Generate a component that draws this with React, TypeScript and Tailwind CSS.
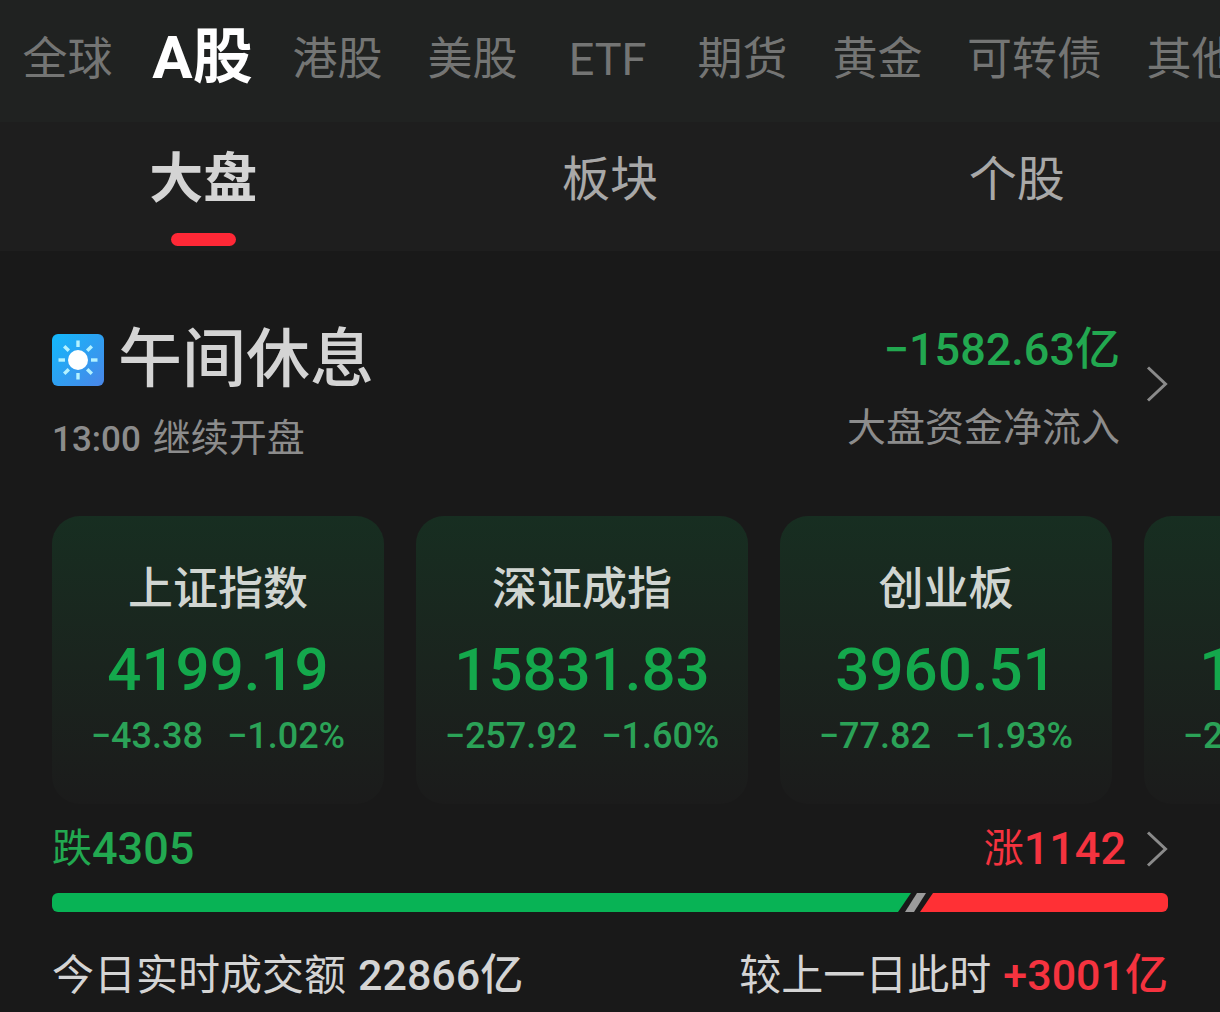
import React, { useState } from 'react';
import { clsx } from 'clsx';

interface IndexQuote {
  name: string;
  value: string;
  change: string;
  percent: string;
}

const markets = ['全球', 'A股', '港股', '美股', 'ETF', '期货', '黄金', '可转债', '其他'];

const sections = ['大盘', '板块', '个股'];

const quotes: IndexQuote[] = [
  { name: '上证指数', value: '4199.19', change: '−43.38', percent: '−1.02%' },
  { name: '深证成指', value: '15831.83', change: '−257.92', percent: '−1.60%' },
  { name: '创业板', value: '3960.51', change: '−77.82', percent: '−1.93%' },
  { name: '科创50', value: '1681.55', change: '−26.47', percent: '−1.55%' },
];

function SunIcon() {
  return (
    <svg viewBox="0 0 52 52" className="size-[52px] shrink-0" aria-hidden="true">
      <defs>
        <linearGradient id="sky" x1="0" y1="0" x2="1" y2="1">
          <stop offset="0" stopColor="#12b9fb" />
          <stop offset="1" stopColor="#4a86e8" />
        </linearGradient>
      </defs>
      <rect width="52" height="52" rx="6" fill="url(#sky)" />
      <circle cx="26" cy="26" r="10" fill="#fff" />
      <g stroke="#b4f2ff" strokeWidth="3.4">
        {[0, 45, 90, 135, 180, 225, 270, 315].map((angle) => (
          <path key={angle} d="M26 6.5v6.5" transform={`rotate(${angle} 26 26)`} />
        ))}
      </g>
    </svg>
  );
}

function Chevron() {
  return (
    <svg viewBox="0 0 22 38" className="h-[38px] w-[22px] shrink-0" fill="none" aria-hidden="true">
      <path d="M2 2.5 19.5 19 2 35.5" stroke="#8a8a8a" strokeWidth="3" />
    </svg>
  );
}

function MarketNav() {
  const [active, setActive] = useState('A股');

  return (
    <nav className="flex h-[122px] items-center overflow-hidden bg-[#202221] pb-[2px]">
      {markets.map((market) => (
        <button
          key={market}
          type="button"
          onClick={() => setActive(market)}
          className={clsx(
            'min-w-[135px] shrink-0 text-center whitespace-nowrap',
            market === active
              ? 'pb-1 text-[60px] leading-[72px] font-bold text-white'
              : 'px-[22px] text-[45px] leading-[72px] text-[#747574]'
          )}
        >
          {market}
        </button>
      ))}
    </nav>
  );
}

function SectionTabs() {
  const [active, setActive] = useState('大盘');

  return (
    <div className="grid h-[129px] grid-cols-3 bg-[#1e1e1e]">
      {sections.map((section) => (
        <button
          key={section}
          type="button"
          onClick={() => setActive(section)}
          className="flex flex-col items-center justify-between pt-[22px] pb-[5px]"
        >
          <span
            className={clsx(
              'leading-[72px]',
              section === active ? 'text-[54px] font-bold text-[#d4d4d4]' : 'text-[48px] text-[#a8a8a8]'
            )}
          >
            {section}
          </span>
          {section === active && <span className="h-[13px] w-[65px] rounded-full bg-[#ff2836]" />}
        </button>
      ))}
    </div>
  );
}

function MarketStatus() {
  return (
    <section className="flex justify-between px-[52px]">
      <div>
        <div className="flex items-center gap-[14px]">
          <SunIcon />
          <h1 className="text-[64px] leading-[80px] font-medium text-[#d4d4d4]">午间休息</h1>
        </div>
        <p className="mt-[10px] flex items-baseline gap-3 text-[38px] leading-[56px] text-[#8c8c8c]">
          <time className="text-[35px] font-medium">13:00</time>
          继续开盘
        </p>
      </div>
      <button type="button" className="flex items-center gap-[26px] self-start">
        <span className="flex flex-col items-end">
          <span className="text-[45px] leading-[60px] font-medium text-[#22a850]">−1582.63亿</span>
          <span className="mt-5 text-[39px] leading-[56px] text-[#8c8c8c]">大盘资金净流入</span>
        </span>
        <span className="pb-2">
          <Chevron />
        </span>
      </button>
    </section>
  );
}

function QuoteCard({ quote }: { quote: IndexQuote }) {
  return (
    <button
      type="button"
      className="flex h-72 w-[332px] shrink-0 flex-col items-center rounded-[28px] bg-linear-to-b from-[#172e21] to-[#1b1b1b] pt-[42px] whitespace-nowrap"
    >
      <span className="text-[45px] leading-[64px] font-medium text-[#d0d5d1]">{quote.name}</span>
      <span className="mt-3 text-[60px] leading-[72px] font-medium text-[#14a84c]">{quote.value}</span>
      <span className="mt-[6px] flex gap-6 text-[36px] leading-[48px] font-medium text-[#2ba257]">
        <span>{quote.change}</span>
        <span>{quote.percent}</span>
      </span>
    </button>
  );
}

function Breadth() {
  return (
    <section className="mt-[13px] px-[52px]">
      <div className="flex items-center justify-between">
        <p className="flex items-center text-[#22a850]">
          <span className="text-[40px] leading-[64px]">跌</span>
          <span className="text-[45px] leading-[64px] font-medium">4305</span>
        </p>
        <button type="button" className="flex items-center text-[#f5333f]">
          <span className="text-[40px] leading-[64px]">涨</span>
          <span className="mr-5 text-[45px] leading-[64px] font-medium">1142</span>
          <Chevron />
        </button>
      </div>
      <div className="mt-3 flex h-[19px] overflow-hidden rounded-md">
        <div className="grow-[859] basis-0 bg-[#08b355] [clip-path:polygon(0_0,100%_0,calc(100%-13px)_100%,0_100%)]" />
        <div className="-mx-[6px] w-[21px] bg-[#9b9b9b] [clip-path:polygon(12px_0,100%_0,9px_100%,0_100%)]" />
        <div className="grow-[248] basis-0 bg-[#ff3035] [clip-path:polygon(13px_0,100%_0,100%_100%,0_100%)]" />
      </div>
    </section>
  );
}

function Turnover() {
  return (
    <section className="mt-[31px] flex items-baseline justify-between px-[52px] text-[42px] leading-[64px] text-[#d4d4d4]">
      <p className="flex items-baseline gap-3">
        今日实时成交额
        <strong className="text-[43px] font-medium">22866亿</strong>
      </p>
      <p className="flex items-baseline gap-3">
        较上一日此时
        <span className="text-[43px] font-medium text-[#f5333f]">+3001亿</span>
      </p>
    </section>
  );
}

export default function App() {
  return (
    <div className="min-h-screen overflow-hidden bg-[#191919] font-[Roboto,'Noto_Sans_CJK_SC',sans-serif]">
      <MarketNav />
      <SectionTabs />
      <main className="pt-[69px]">
        <MarketStatus />
        <div className="mt-12 flex gap-8 overflow-hidden pl-[52px]">
          {quotes.map((quote) => (
            <QuoteCard key={quote.name} quote={quote} />
          ))}
        </div>
        <Breadth />
        <Turnover />
      </main>
    </div>
  );
}
